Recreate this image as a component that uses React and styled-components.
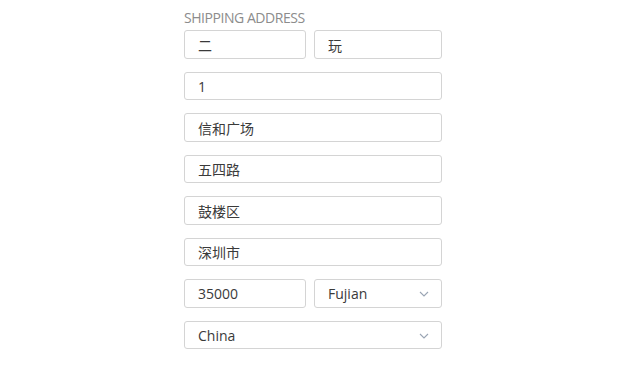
import React from "react";
import styled, { createGlobalStyle } from "styled-components";

const GlobalStyle = createGlobalStyle`
  html, body {
    margin: 0;
    padding: 0;
    background: #ffffff;
  }
  body {
    font-family: "Open Sans", "Noto Sans CJK SC", sans-serif;
  }
`;

const Page = styled.div`
  width: 640px;
  height: 365px;
  padding-left: 184px;
  box-sizing: border-box;
  overflow: hidden;
`;

const Form = styled.div`
  width: 258px;
  padding-top: 9px;
  display: flex;
  flex-direction: column;
`;

const Label = styled.div`
  font-size: 14px;
  color: #8c8c8c;
  line-height: 18px;
  margin-bottom: 3px;
  letter-spacing: -0.45px;
`;

const Row = styled.div`
  display: flex;
  gap: 8px;
  margin-bottom: 13px;
`;

const Field = styled.div`
  position: relative;
  box-sizing: border-box;
  height: 28.5px;
  width: ${(props) => (props.w ? props.w + "px" : "100%")};
  flex: ${(props) => (props.w ? "none" : "1")};
  border: 1px solid #d4d4d4;
  border-radius: 3px;
  display: flex;
  align-items: center;
  padding-left: 13px;
  padding-top: 1px;
  font-size: 14px;
  color: #3a3a3a;
  font-family: "Open Sans", "Noto Sans CJK SC", sans-serif;
`;

const Chevron = styled.svg`
  position: absolute;
  right: 12px;
  top: 50%;
  margin-top: -2px;
  width: 10px;
  height: 6px;
`;

const Select = ({ value, w }) => (
  <Field w={w}>
    {value}
    <Chevron viewBox="0 0 10 6">
      <path d="M1 1 L5 5 L9 1" fill="none" stroke="#9aa5b4" strokeWidth="1.1" />
    </Chevron>
  </Field>
);

const App = () => {
  return (
    <Page>
      <GlobalStyle />
      <Form>
        <Label>SHIPPING ADDRESS</Label>
        <Row>
          <Field w={122}>二</Field>
          <Field>玩</Field>
        </Row>
        <Row>
          <Field>1</Field>
        </Row>
        <Row>
          <Field>信和广场</Field>
        </Row>
        <Row>
          <Field>五四路</Field>
        </Row>
        <Row>
          <Field>鼓楼区</Field>
        </Row>
        <Row>
          <Field>深圳市</Field>
        </Row>
        <Row>
          <Field w={122}>35000</Field>
          <Select value="Fujian" />
        </Row>
        <Row>
          <Select value="China" />
        </Row>
      </Form>
    </Page>
  );
};

export default App;
